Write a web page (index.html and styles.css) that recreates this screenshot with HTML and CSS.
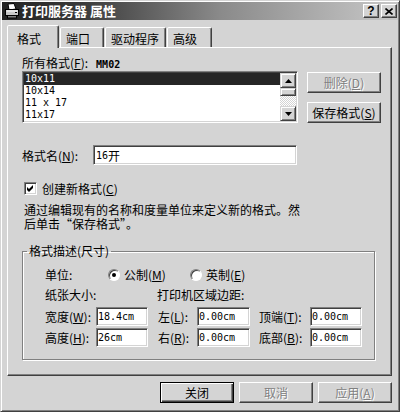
FILE: index.html
```html
<!DOCTYPE html>
<html lang="zh-CN">
<head>
<meta charset="utf-8">
<title>打印服务器 属性</title>
<link rel="stylesheet" href="styles.css">
</head>
<body>
<div class="window">
  <div class="titlebar">
    <svg class="app-icon" width="16" height="16" viewBox="0 0 16 16">
      <polygon points="4,1 10,0.5 12,6 5,7" fill="#fff" stroke="#000" stroke-width="1"/>
      <rect x="1.5" y="6.5" width="13" height="6" fill="#c8c8c8" stroke="#000"/>
      <rect x="2.5" y="7.5" width="11" height="1" fill="#fff"/>
      <rect x="3.5" y="12.5" width="9" height="2.5" fill="#808080" stroke="#000"/>
      <rect x="11" y="9" width="2" height="1" fill="#000"/>
    </svg>
    <span class="title">打印服务器 属性</span>
    <div class="caption-btns">
      <span class="cbtn help">?</span>
      <span class="cbtn close">
        <svg width="8" height="7" viewBox="0 0 8 7"><path d="M0.5 0.5 L7.5 6.5 M7.5 0.5 L0.5 6.5" stroke="#000" stroke-width="1.6"/></svg>
      </span>
    </div>
  </div>

  <div class="body">
    <div class="tabs">
      <div class="tab active">格式</div>
      <div class="tab">端口</div>
      <div class="tab tab-wide">驱动程序</div>
      <div class="tab">高级</div>
    </div>

    <div class="panel">
      <div class="lbl-row">所有格式(<u>F</u>):<span class="mono server">MM02</span></div>

      <div class="list-row">
        <div class="listbox">
          <div class="items">
            <div class="item sel">10x11</div>
            <div class="item">10x14</div>
            <div class="item">11 x 17</div>
            <div class="item">11x17</div>
          </div>
          <div class="scrollbar">
            <div class="sb-btn">
              <svg width="7" height="4" viewBox="0 0 7 4"><polygon points="3.5,0 7,4 0,4" fill="#000"/></svg>
            </div>
            <div class="sb-thumb"></div>
            <div class="sb-track"></div>
            <div class="sb-btn">
              <svg width="7" height="4" viewBox="0 0 7 4"><polygon points="0,0 7,0 3.5,4" fill="#000"/></svg>
            </div>
          </div>
        </div>
        <div class="side-btns">
          <div class="btn disabled">删除(<u>D</u>)</div>
          <div class="btn">保存格式(<u>S</u>)</div>
        </div>
      </div>

      <div class="name-row">
        <span class="name-lbl">格式名(<u>N</u>):</span>
        <div class="edit name-edit"><span class="mono">16</span>开</div>
      </div>

      <div class="check-row">
        <span class="checkbox">
          <svg width="9" height="9" viewBox="0 0 9 9"><polygon points="1,3 3,5 7,1 7,4 3,8 1,6" fill="#000"/></svg>
        </span>
        <span>创建新格式(<u>C</u>)</span>
      </div>

      <p class="desc">通过编辑现有的名称和度量单位来定义新的格式。然<br>后单击“保存格式”。</p>

      <fieldset class="group">
        <legend>格式描述(尺寸)</legend>
        <div class="group-body">
          <div class="unit-row">
            <span class="unit-lbl">单位:</span>
            <span class="radio-opt opt1"><span class="radio on"></span>公制(<u>M</u>)</span>
            <span class="radio-opt"><span class="radio"></span>英制(<u>E</u>)</span>
          </div>
          <div class="paper-row">
            <span class="paper-lbl">纸张大小:</span>
            <span>打印机区域边距:</span>
          </div>
          <div class="field-row">
            <span class="f-lbl c1">宽度(<u>W</u>):</span>
            <div class="edit f-edit w52 mono">18.4cm</div>
            <span class="f-lbl c2">左(<u>L</u>):</span>
            <div class="edit f-edit w53 mono">0.00cm</div>
            <span class="f-lbl c3">顶端(<u>T</u>):</span>
            <div class="edit f-edit w52 mono">0.00cm</div>
          </div>
          <div class="field-row second">
            <span class="f-lbl c1">高度(<u>H</u>):</span>
            <div class="edit f-edit w52 mono">26cm</div>
            <span class="f-lbl c2">右(<u>R</u>):</span>
            <div class="edit f-edit w53 mono">0.00cm</div>
            <span class="f-lbl c3">底部(<u>B</u>):</span>
            <div class="edit f-edit w52 mono">0.00cm</div>
          </div>
        </div>
      </fieldset>
    </div>

    <div class="footer">
      <div class="btn foot default">关闭</div>
      <div class="btn foot disabled">取消</div>
      <div class="btn foot disabled">应用(<u>A</u>)</div>
    </div>
  </div>
</div>
</body>
</html>
```
FILE: styles.css
```css
* { box-sizing: border-box; }
html, body { margin: 0; padding: 0; }
body {
  width: 400px;
  height: 412px;
  overflow: hidden;
  background: #d4d4d4;
  font-family: "Noto Sans CJK SC", "Noto Sans", sans-serif;
  font-size: 12px;
  color: #000;
}
u { text-decoration: underline; text-underline-offset: 1px; }

.window {
  width: 400px;
  height: 412px;
  padding: 1px;
  background: #d4d4d4;
  border: 1px solid;
  border-color: #d4d4d4 #404040 #404040 #d4d4d4;
  box-shadow: inset 1px 1px #fff, inset -1px -1px #808080;
  display: flex;
  flex-direction: column;
}

/* title bar */
.titlebar {
  height: 18px;
  display: flex;
  align-items: center;
  padding: 0 1px 0 2px;
  background: linear-gradient(90deg, #222 0%, #3a3a3a 20%, #8a8a8a 55%, #c8c8c8 100%);
}
.app-icon { flex: none; margin-right: 2px; }
.title {
  color: #fff;
  font-weight: bold;
  font-size: 13px;
  line-height: 18px;
  white-space: pre;
}
.caption-btns { margin-left: auto; display: flex; gap: 2px; }
.cbtn {
  width: 16px;
  height: 14px;
  display: flex;
  align-items: center;
  justify-content: center;
  background: #d4d4d4;
  border: 1px solid;
  border-color: #fff #404040 #404040 #fff;
  box-shadow: inset -1px -1px #808080;
}
.cbtn.help {
  font-family: "Liberation Sans", sans-serif;
  font-weight: bold;
  font-size: 12px;
  line-height: 12px;
}

/* body */
.body {
  flex: 1;
  display: flex;
  flex-direction: column;
  padding: 5px 6px 0 5px;
}

.tabs {
  display: flex;
  align-items: flex-end;
  gap: 1px;
  height: 22px;
  position: relative;
  z-index: 1;
}
.tab {
  width: 44px;
  height: 20px;
  padding: 3px 0 0 5px;
  line-height: 16px;
  border: 1px solid;
  border-bottom: none;
  border-color: #fff #404040 transparent #fff;
  border-radius: 2px 2px 0 0;
  box-shadow: inset -1px 0 #808080;
  background: #d4d4d4;
}
.tab-wide { width: 61px; }
.tab:last-child { width: 45px; }
.tab.active {
  width: 52px;
  height: 23px;
  margin-bottom: -1px;
  padding: 5px 0 0 9px;
}

.panel {
  height: 329px;
  padding: 8px 0 0 14px;
  border: 1px solid;
  border-color: #fff #404040 #404040 #fff;
  box-shadow: inset -1px -1px #808080;
}

.mono {
  font-family: "DejaVu Sans Mono", "Liberation Mono", monospace;
  font-size: 10px;
}

.lbl-row { height: 14px; line-height: 14px; }
.server { margin-left: 8px; font-weight: bold; font-size: 10px; }

.list-row { display: flex; margin-top: 1px; height: 52px; }
.listbox {
  width: 276px;
  height: 52px;
  padding: 1px;
  display: flex;
  background: #fff;
  border: 1px solid;
  border-color: #808080 #fff #fff #808080;
  box-shadow: inset 1px 1px #404040, inset -1px -1px #d4d4d4;
}
.items { flex: 1; }
.item {
  height: 12px;
  line-height: 12px;
  padding-left: 1px;
  white-space: pre;
  font-family: "DejaVu Sans Mono", "Liberation Mono", monospace;
  font-size: 10px;
}
.item.sel { background: #262626; color: #fff; }

.scrollbar { width: 16px; display: flex; flex-direction: column; }
.sb-btn, .sb-thumb {
  background: #d4d4d4;
  border: 1px solid;
  border-color: #d4d4d4 #404040 #404040 #d4d4d4;
  box-shadow: inset 1px 1px #fff, inset -1px -1px #808080;
}
.sb-btn { height: 15px; display: flex; align-items: center; justify-content: center; }
.sb-thumb { height: 8px; }
.sb-track {
  flex: 1;
  background: repeating-conic-gradient(#fff 0 25%, #d4d4d4 0 50%) 0 0 / 2px 2px;
}

.side-btns {
  margin-left: 9px;
  width: 74px;
  padding-top: 1px;
  display: flex;
  flex-direction: column;
  justify-content: space-between;
}

.btn {
  height: 21px;
  display: flex;
  align-items: center;
  justify-content: center;
  line-height: 14px;
  background: #d4d4d4;
  border: 1px solid;
  border-color: #fff #404040 #404040 #fff;
  box-shadow: inset -1px -1px #808080;
}
.btn.disabled { color: #808080; text-shadow: 1px 1px #fff; }
.btn.default {
  border-color: #000;
  box-shadow: inset 1px 1px #fff, inset -1px -1px #404040, inset -2px -2px #808080;
}

.edit {
  background: #fff;
  border: 1px solid;
  border-color: #808080 #fff #fff #808080;
  box-shadow: inset 1px 1px #404040, inset -1px -1px #d4d4d4;
  padding: 0 2px;
  display: flex;
  align-items: center;
  white-space: pre;
}

.name-row { display: flex; align-items: center; margin-top: 22px; height: 20px; }
.name-lbl { width: 71px; }
.name-edit { width: 204px; height: 20px; }

.check-row { display: flex; align-items: center; margin-top: 17px; height: 13px; line-height: 13px; }
.checkbox {
  width: 13px;
  height: 13px;
  margin: 0 5px 0 2px;
  background: #fff;
  border: 1px solid;
  border-color: #808080 #fff #fff #808080;
  box-shadow: inset 1px 1px #404040, inset -1px -1px #d4d4d4;
  display: flex;
  align-items: center;
  justify-content: center;
}

.desc { margin: 8px 0 0 2px; line-height: 14px; }

.group {
  margin: 13px 0 0 0;
  width: 353px;
  padding: 10px 0 12px 4px;
  border: 1px solid #808080;
  box-shadow: inset 1px 1px #fff, 1px 1px #fff;
  min-inline-size: 0;
}
.group legend { padding: 0 2px; line-height: 14px; }
.group-body { padding-left: 18px; }

.unit-row { display: flex; align-items: center; height: 14px; line-height: 14px; }
.unit-lbl { width: 63px; }
.radio-opt { display: flex; align-items: center; }
.radio-opt.opt1 { width: 82px; }
.radio {
  width: 12px;
  height: 12px;
  margin-right: 4px;
  border-radius: 50%;
  background: #fff;
  border: 1px solid;
  border-color: #808080 #fff #fff #808080;
  box-shadow: inset 1px 1px #404040;
  display: flex;
  align-items: center;
  justify-content: center;
}
.radio.on::after {
  content: "";
  width: 4px;
  height: 4px;
  border-radius: 50%;
  background: #000;
}

.paper-row { display: flex; margin-top: 6px; height: 14px; line-height: 14px; }
.paper-lbl { width: 112px; }

.field-row { display: flex; align-items: center; margin-top: 5px; height: 19px; }
.field-row.second { margin-top: 2px; }
.f-lbl { line-height: 14px; white-space: nowrap; }
.f-lbl.c1 { width: 51px; }
.f-lbl.c2 { width: 39px; margin-left: 10px; }
.f-lbl.c3 { width: 51px; margin-left: 9px; }
.f-edit { height: 19px; padding-left: 1px; }
.w52 { width: 52px; }
.w53 { width: 53px; }

.footer {
  display: flex;
  justify-content: flex-end;
  gap: 5px;
  margin-top: 6px;
}
.btn.foot { width: 74px; }
```
